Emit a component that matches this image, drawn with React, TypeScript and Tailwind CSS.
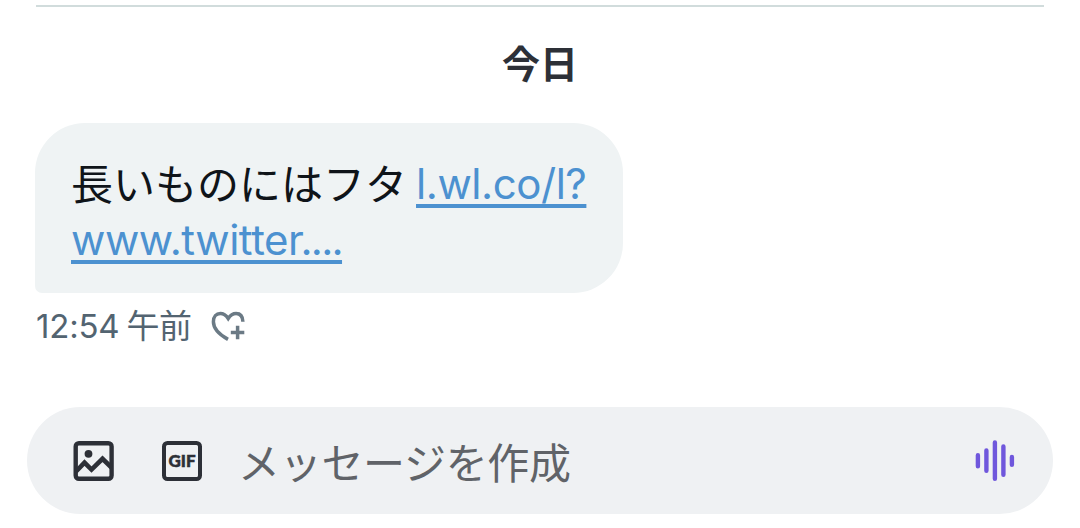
import React from "react";

const HeartPlus = () => (
  <svg className="h-[31px] w-[34px]" viewBox="0 0 34 31" fill="none" stroke="#6b7a85" strokeWidth="3.5">
    <path d="M17 28.4C9 24 2.4 18.3 2.4 10.8C2.4 5.4 5.4 2.6 9.3 2.6C12.4 2.6 15 4.2 17.2 7.6C19.4 4.2 22 2.6 25.1 2.6C28.9 2.6 31.7 5.3 31.9 10.8" />
    <path d="M26.6 14.8V28.2M19.8 21.5H33.3" />
  </svg>
);

const ImageIcon = () => (
  <svg className="h-10 w-[41px]" viewBox="0 0 41 40" fill="none" stroke="#2d3037">
    <rect x="2.7" y="2.2" width="35.9" height="35.6" rx="3.2" strokeWidth="4.4" />
    <path d="M3 30.5L11.5 21.6L18.5 28.6L29.5 17.8L38.5 26.5" strokeWidth="4.6" />
    <circle cx="15.5" cy="12.8" r="3.9" fill="#2d3037" stroke="none" />
  </svg>
);

const GifIcon = () => (
  <div className="flex size-10 items-center justify-center rounded-[5.5px] border-4 border-[#2d3037] font-['Lato'] text-[17px] leading-none font-black text-[#2d3037]">
    <span className="[-webkit-text-stroke:0.5px_#2d3037]">GIF</span>
  </div>
);

const VoiceIcon = () => (
  <svg className="h-[42px] w-10" viewBox="0 0 40 42" stroke="#6f57dc" strokeWidth="4.4" strokeLinecap="round">
    <path d="M2.9 15.2V26.2M11.4 10.4V30.8M19.9 2.4V38.8M28.4 6.4V34.8M36.9 17V24.8" />
  </svg>
);

const linkClass =
  "font-['Inter'] text-[#4c91d0] underline decoration-[3.5px] underline-offset-[5px] [font-variant-ligatures:none] [text-decoration-skip-ink:none]";

export default function App() {
  return (
    <main className="flex h-[528px] w-[1080px] flex-col overflow-hidden bg-white font-['Inter','Noto_Sans_CJK_JP',sans-serif]">
      <div className="mx-9 mt-[5px] h-0.5 shrink-0 bg-[#d1dcdc]" />
      <h1 className="mt-[32px] h-[46px] text-center font-['Noto_Sans_CJK_JP',sans-serif] text-[38px] leading-[46px] font-bold text-[#2d3037]">今日</h1>
      <div className="mt-[38px] ml-[35px] flex h-[170px] w-[588px] flex-col rounded-[50px] rounded-bl-[7px] bg-[#eff3f4] pt-[31px] pl-[36px] text-[42px] text-[#0f1419]">
        <div className="flex h-14 items-baseline leading-[56px] whitespace-nowrap">
          <span className="font-['Noto_Sans_CJK_JP',sans-serif]">長いものにはフタ</span>
          <a className={`ml-[9px] -translate-y-px tracking-[-0.45px] ${linkClass}`}>l.wl.co/l?</a>
        </div>
        <div className="mt-[2px] h-14 leading-[56px] whitespace-nowrap">
          <a className={`tracking-[-0.45px] ${linkClass}`}>www.twitter<span className="-ml-[3px] tracking-[-1.7px]">....</span></a>
        </div>
      </div>
      <div className="mt-[10px] ml-9 flex h-[46px] items-center text-[#536471]">
        <span className="text-[33px] leading-[46px] tracking-[-0.2px] whitespace-nowrap">12:54<span className="ml-[7px] tracking-[-0.5px]">午前</span></span>
        <span className="ml-[19.5px]"><HeartPlus /></span>
      </div>
      <div className="mt-[58px] ml-[27px] flex h-[107px] w-[1026px] shrink-0 items-center rounded-full bg-[#eff1f3] pr-[38px] pl-[46px]">
        <ImageIcon />
        <span className="ml-[48px]"><GifIcon /></span>
        <span className="ml-[36px] grow font-['Noto_Sans_CJK_JP',sans-serif] text-[42px] leading-[60px] tracking-[-0.3px] text-[#606368]">メッセージを作成</span>
        <VoiceIcon />
      </div>
    </main>
  );
}
